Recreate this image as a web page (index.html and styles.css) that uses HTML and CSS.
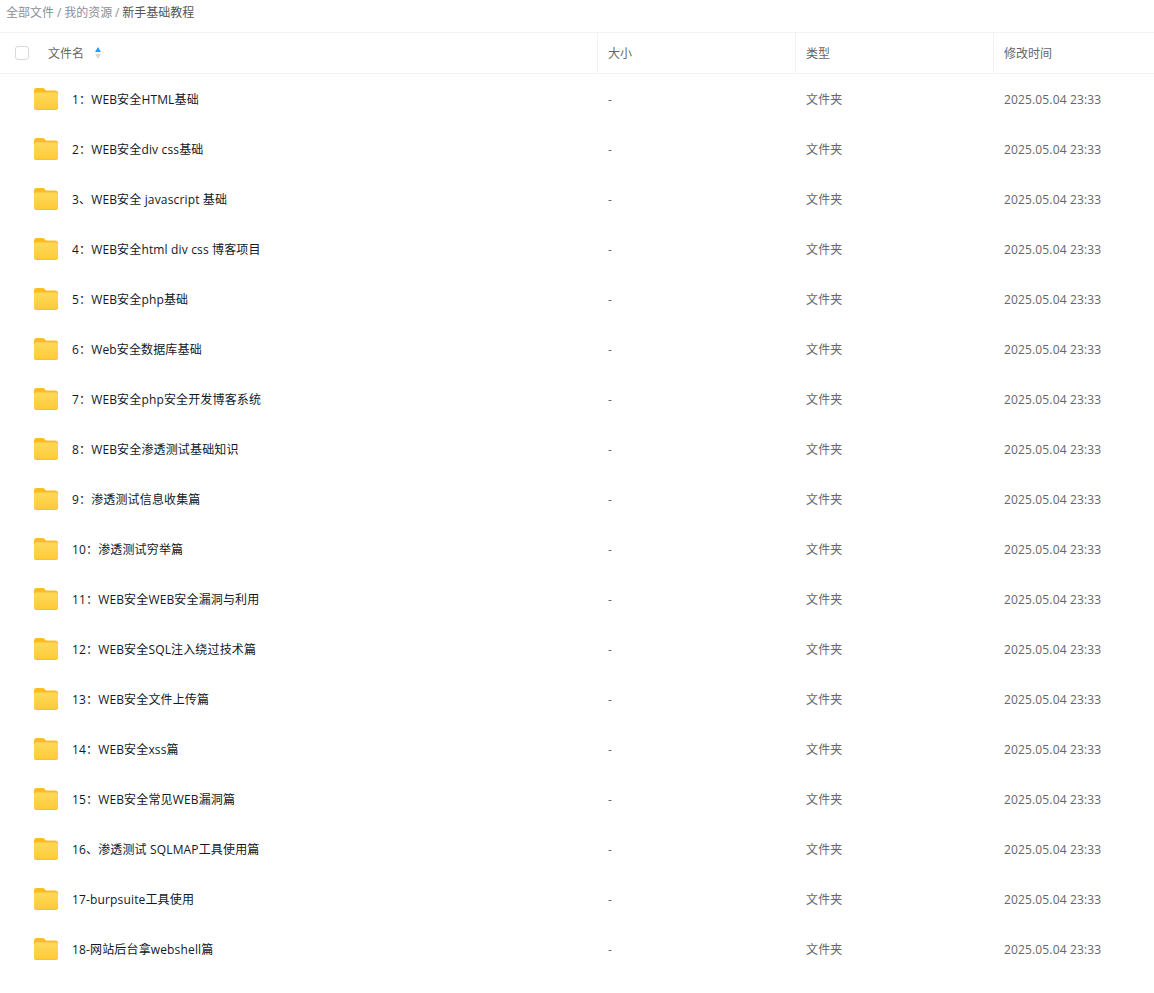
FILE: index.html
```html
<!DOCTYPE html>
<html lang="en">
<head>
    <meta charset="UTF-8">
    <title>新手基础教程</title>
    <link rel="stylesheet" href="styles.css">
</head>
<body>
    <svg class="defs" width="0" height="0">
        <defs>
            <linearGradient id="folder-front" x1="0" y1="0" x2="0" y2="1">
                <stop offset="0" stop-color="#ffd95c"/>
                <stop offset="1" stop-color="#ffc936"/>
            </linearGradient>
            <symbol id="folder" viewBox="0 0 24 22">
                <path d="M0 2.500C0 1.100 1.100 0 2.500 0H8.500C9.500 0 10.200 .5 10.900 1.200L12 2.400H21.500C22.900 2.400 24 3.500 24 4.900V10H0Z" fill="#ffbb24"/>
                <path d="M0 6.800C0 5.500 1 4.500 2.300 4.500H21.700C23 4.500 24 5.500 24 6.800V19.500C24 20.900 22.900 22 21.500 22H2.500C1.100 22 0 20.900 0 19.500Z" fill="url(#folder-front)"/>
                <path d="M0 19.500C0 20.900 1.100 22 2.500 22H21.500C22.900 22 24 20.900 24 19.500V19.200C24 20.200 22.900 21 21.500 21H2.500C1.100 21 0 20.200 0 19.200Z" fill="#ffbf2b"/>
            </symbol>
        </defs>
    </svg>

    <div class="crumbs">
        <span>全部文件</span> / <span>我的资源</span> / <span class="current">新手基础教程</span>
    </div>

    <div class="row head">
        <div class="cell name">
            <span class="check"></span>
            <span>文件名</span>
            <span class="sort"><i class="up"></i><i class="down"></i></span>
        </div>
        <div class="cell">大小</div>
        <div class="cell">类型</div>
        <div class="cell">修改时间</div>
    </div>

    <div id="list"></div>

    <script>
        const names = [
            '1：WEB安全HTML基础',
            '2：WEB安全div css基础',
            '3、WEB安全 javascript 基础',
            '4：WEB安全html div css 博客项目',
            '5：WEB安全php基础',
            '6：Web安全数据库基础',
            '7：WEB安全php安全开发博客系统',
            '8：WEB安全渗透测试基础知识',
            '9：渗透测试信息收集篇',
            '10：渗透测试穷举篇',
            '11：WEB安全WEB安全漏洞与利用',
            '12：WEB安全SQL注入绕过技术篇',
            '13：WEB安全文件上传篇',
            '14：WEB安全xss篇',
            '15：WEB安全常见WEB漏洞篇',
            '16、渗透测试 SQLMAP工具使用篇',
            '17-burpsuite工具使用',
            '18-网站后台拿webshell篇'
        ];

        const list = document.getElementById('list');
        names.forEach(function(name) {
            list.insertAdjacentHTML('beforeend',
                '<div class="row file">' +
                '<div class="cell name"><svg class="folder"><use href="#folder"/></svg><span class="title">' + name + '</span></div>' +
                '<div class="cell">-</div>' +
                '<div class="cell">文件夹</div>' +
                '<div class="cell">2025.05.04 23:33</div>' +
                '</div>');
        });
    </script>
</body>
</html>
```

FILE: styles.css
```css
* {
    margin: 0;
    padding: 0;
    box-sizing: border-box;
}

body {
    background: #fff;
    color: #666;
    font-family: "Open Sans", "Noto Sans CJK SC", sans-serif;
    font-size: 12px;
    line-height: 18px;
}

.defs {
    display: block;
    height: 0;
}

.crumbs {
    height: 33px;
    padding: 4px 0 0 6px;
    color: #8a9099;
    word-spacing: -0.25px;
    border-bottom: 1px solid #f2f2f2;
}

.current {
    color: #555;
}

.row {
    display: grid;
    grid-template-columns: 597px 198px 198px 1fr;
}

.head {
    height: 41px;
    border-bottom: 1px solid #f2f2f2;
}

.head .cell {
    border-left: 1px solid #f2f2f2;
    padding-left: 10px;
}

.head .cell.name {
    border-left: none;
    padding-left: 15px;
}

.file {
    height: 50px;
    letter-spacing: 0.15px;
}

.cell {
    display: flex;
    align-items: center;
    padding-top: 2px;
    padding-left: 11px;
}

.cell.name {
    padding-left: 34px;
}

.check {
    width: 14px;
    height: 14px;
    margin-top: -2px;
    margin-right: 19px;
    border: 1px solid #d9d9d9;
    border-radius: 3px;
}

.sort {
    display: flex;
    flex-direction: column;
    gap: 2px;
    margin-top: -2px;
    margin-left: 11px;
}

.sort i {
    display: block;
    width: 0;
    height: 0;
    border-left: 3.5px solid transparent;
    border-right: 3.5px solid transparent;
}

.sort .up {
    border-bottom: 5px solid #1e9fff;
}

.sort .down {
    border-top: 5px solid #d4d7de;
}

.folder {
    width: 24px;
    height: 22px;
    margin-top: -2px;
    margin-right: 14px;
}

.title {
    color: #0f1828;
}
```
